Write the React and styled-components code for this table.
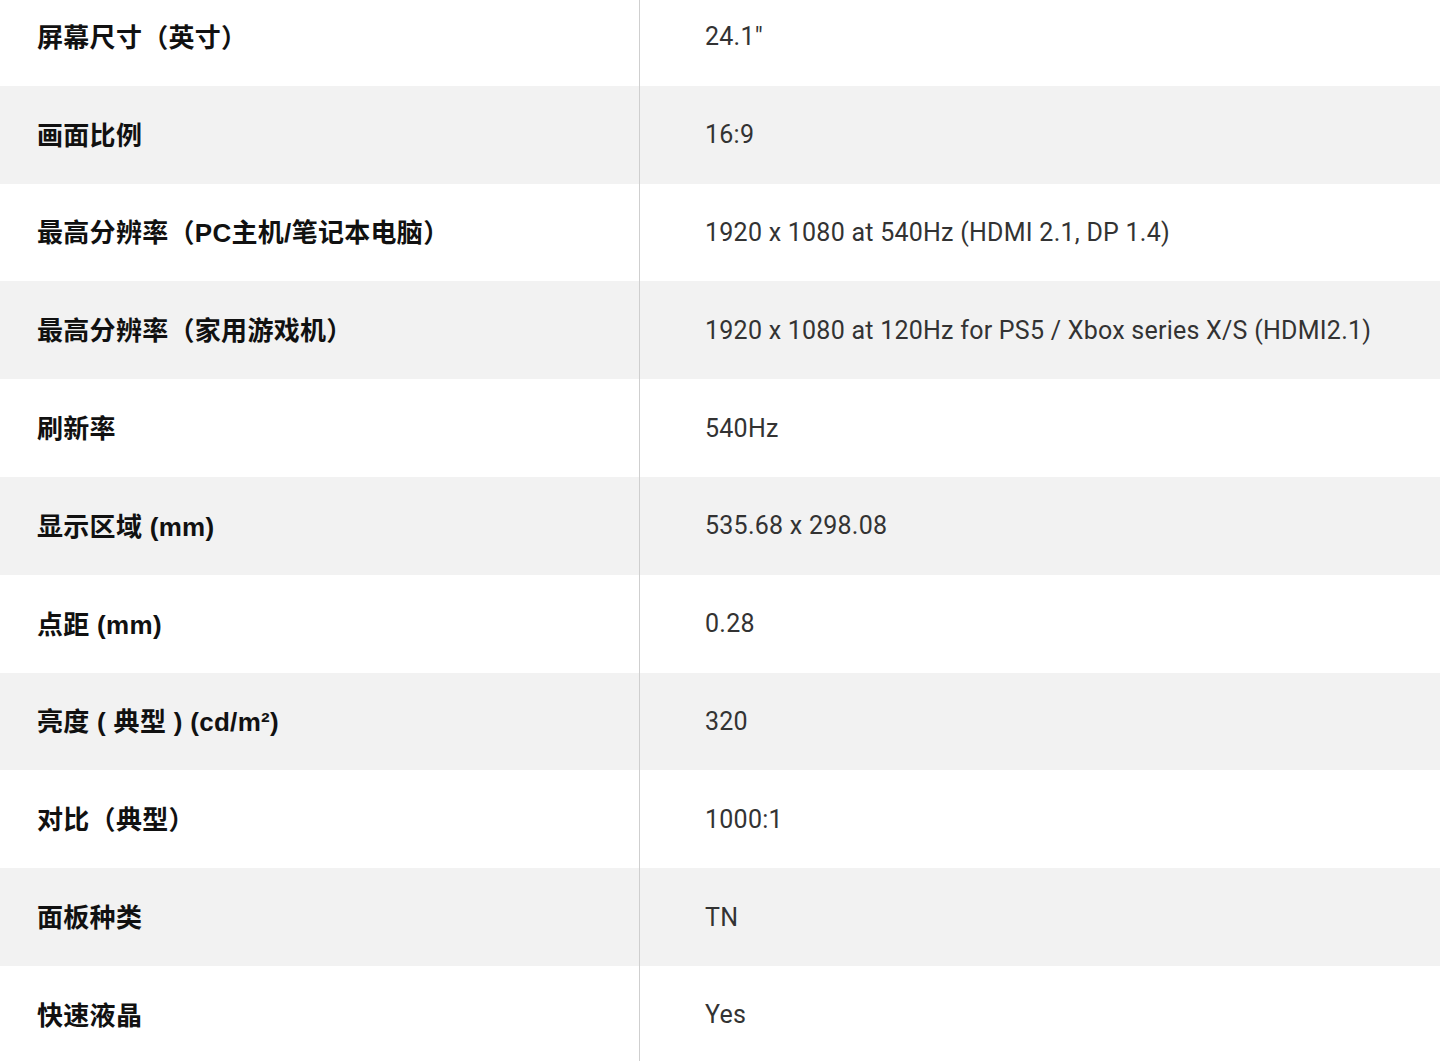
import styled, {createGlobalStyle} from "styled-components";

const GlobalStyle = createGlobalStyle`
  html, body {
    margin: 0;
    padding: 0;
    background: #ffffff;
  }
`;

const specs = [
    ["屏幕尺寸（英寸）", "24.1\""],
    ["画面比例", "16:9"],
    ["最高分辨率（PC主机/笔记本电脑）", "1920 x 1080 at 540Hz (HDMI 2.1, DP 1.4)"],
    ["最高分辨率（家用游戏机）", "1920 x 1080 at 120Hz for PS5 / Xbox series X/S (HDMI2.1)"],
    ["刷新率", "540Hz"],
    ["显示区域 (mm)", "535.68 x 298.08"],
    ["点距 (mm)", "0.28"],
    ["亮度 ( 典型 ) (cd/m²)", "320"],
    ["对比（典型）", "1000:1"],
    ["面板种类", "TN"],
    ["快速液晶", "Yes"],
];

const Table = styled.div`
  display: flex;
  flex-direction: column;
  margin-top: -12px;
  overflow: hidden;
`;

const Row = styled.div`
  display: grid;
  grid-template-columns: 640px 1fr;
  height: 97.8px;
  background: ${({$shaded}) => ($shaded ? "#f2f2f2" : "#ffffff")};
`;

const Label = styled.div`
  display: flex;
  align-items: center;
  padding-left: 37px;
  padding-bottom: 3px;
  border-right: 1px solid #cfcfcf;
  font-family: "Liberation Sans", "Noto Sans CJK SC", sans-serif;
  font-weight: 700;
  font-size: 26px;
  letter-spacing: 0.3px;
  color: #111111;
`;

const Value = styled.div`
  display: flex;
  align-items: center;
  padding-left: 65px;
  font-family: Roboto, "Noto Sans CJK SC", sans-serif;
  font-size: 25px;
  letter-spacing: 0.25px;
  color: #333333;
`;

const App = () => {
    return (
        <>
            <GlobalStyle/>
            <Table>
                {specs.map(([label, value], i) => (
                    <Row key={label} $shaded={i % 2 === 1}>
                        <Label>{label}</Label>
                        <Value>{value}</Value>
                    </Row>
                ))}
            </Table>
        </>
    );
};

export default App;
